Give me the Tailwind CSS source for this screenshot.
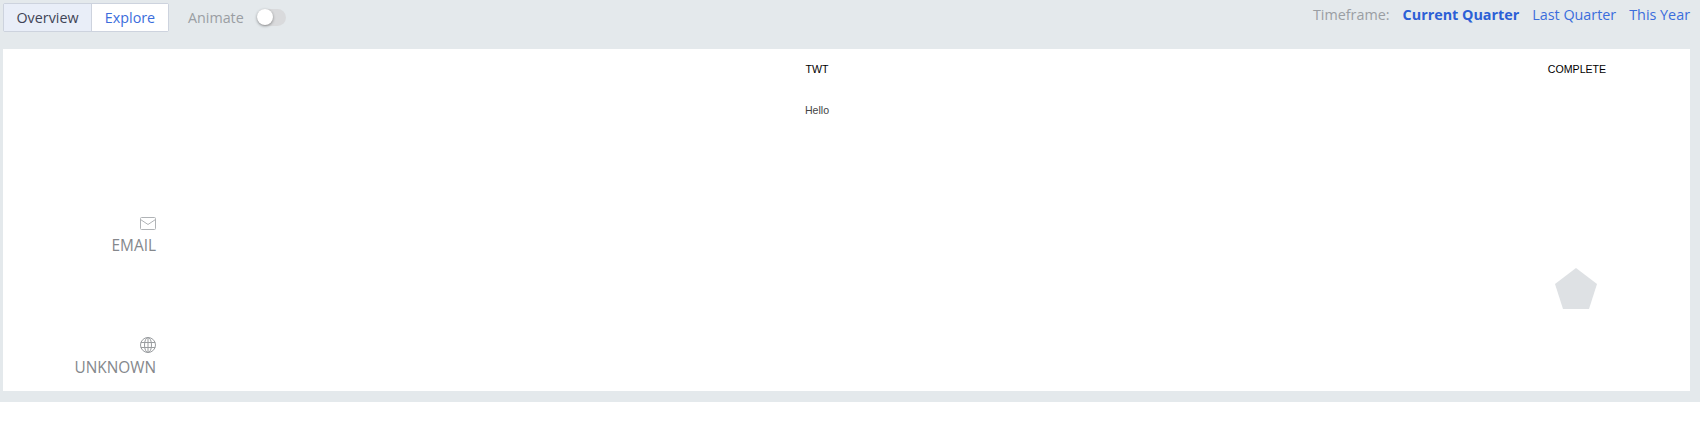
<!DOCTYPE html>
<html lang="en">

<head>
    <meta charset="UTF-8">
    <title>Overview</title>
    <script src="https://cdn.jsdelivr.net/npm/@tailwindcss/browser@4"></script>
</head>

<body class="bg-white font-['Open_Sans',sans-serif]">
    <div class="h-[402px] bg-[#e4e9ec] pl-[3px] pr-[10px] flex flex-col">
        <!-- toolbar -->
        <div class="h-[49px] shrink-0 flex justify-between pt-[3px]">
            <div class="flex items-start">
                <div class="flex h-[29px] rounded-[2px] border border-[#cdd3de] text-[14.3px] leading-[27px]">
                    <span class="w-[88px] text-center bg-[#e9eef8] text-[#3f4456] border-r border-[#cdd3de]">Overview</span>
                    <span class="w-[76px] text-center bg-white text-[#3b6ddc]">Explore</span>
                </div>
                <span class="ml-[19px] text-[14.3px] leading-[29px] text-[#9a9ea3]">Animate</span>
                <!-- toggle -->
                <div class="relative ml-[13px] mt-[6px] w-[29px] h-[17px] rounded-full bg-[#d9dadc]">
                    <div class="absolute left-0 top-0 w-[16px] h-[16px] rounded-full bg-white shadow-[0_1px_3px_rgba(0,0,0,0.4)]"></div>
                </div>
            </div>
            <div class="flex text-[14.35px] leading-[24px] text-[#3b6ddc]">
                <span class="text-[#9a9ea3] mr-[13px]">Timeframe:</span>
                <span class="font-bold text-[#2c5fd6] mr-[13px]">Current Quarter</span>
                <span class="mr-[13px]">Last Quarter</span>
                <span>This Year</span>
            </div>
        </div>

        <!-- card -->
        <div class="h-[342px] bg-white grid grid-cols-[153px_1322px_198px] font-['Liberation_Sans',sans-serif]">
            <div class="flex flex-col items-end font-['Open_Sans',sans-serif] text-[15.4px] leading-[22px] text-[#85888c]">
                <svg class="mt-[168px] block" width="16" height="13" viewBox="0 0 16 13" fill="none" stroke="#b0b3b6">
                    <rect x="0.5" y="0.5" width="15" height="12" rx="1" />
                    <path d="M0.5 2.5 L8 7.5 L15.5 2.5" />
                </svg>
                <span class="mt-[5px]">EMAIL</span>
                <svg class="mt-[80px] block" width="16" height="16" viewBox="0 0 16 16" fill="none" stroke="#9a9da0">
                    <circle cx="8" cy="8" r="7.5" />
                    <ellipse cx="8" cy="8" rx="3.5" ry="7.5" />
                    <path d="M8 0.5 V15.5 M0.8 5.5 H15.2 M0.8 10.5 H15.2" />
                </svg>
                <span class="mt-[4px]">UNKNOWN</span>
            </div>
            <div class="flex flex-col items-center">
                <span class="mt-[13px] text-[10.6px] leading-[14px] text-black">TWT</span>
                <span class="mt-[27px] text-[10.6px] leading-[14px] text-[#444444]">Hello</span>
            </div>
            <div class="flex flex-col items-center">
                <span class="mt-[13px] text-[10.6px] leading-[14px] text-black">COMPLETE</span>
                <svg class="mt-[192px] block" width="44" height="42" viewBox="0 0 44 42">
                    <polygon points="21,0 42,16 34,41 8,41 0,16" fill="#dee1e4" />
                </svg>
            </div>
        </div>
    </div>
</body>

</html>
